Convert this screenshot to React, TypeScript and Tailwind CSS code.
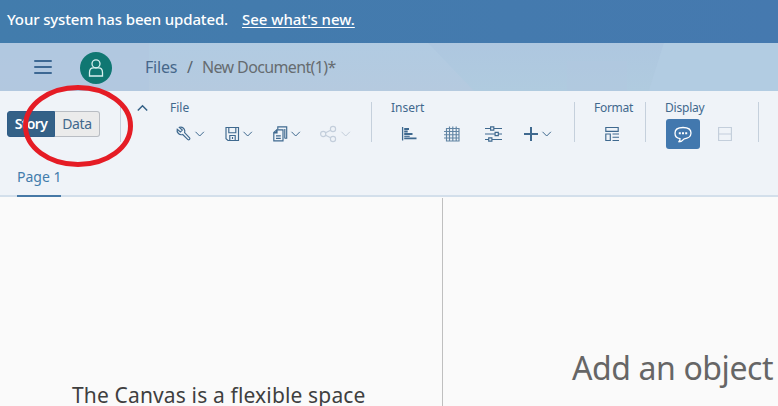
import type { ReactNode } from "react";

function Icon({ w, children, faded = false }: { w: string; children: ReactNode; faded?: boolean }) {
  return (
    <span className={`flex h-[16px] shrink-0 ${w} ${faded ? "text-[#c3cedb]" : "text-[#3f698f]"}`}>
      <svg className="size-full overflow-visible" fill="none" stroke="currentColor" strokeWidth="1.15">
        {children}
      </svg>
    </span>
  );
}

function Chevron({ faded = false }: { faded?: boolean }) {
  return (
    <Icon w="w-[9px]" faded={faded}>
      <path d="M.5 5.800 4.700 10 8.900 5.800" strokeWidth="1" />
    </Icon>
  );
}

function Divider() {
  return <div className="mt-[11px] h-[40px] w-px shrink-0 bg-[#c5d0dc]" />;
}

function Group({ label, tracking, className, children }: { label: string; tracking: string; className: string; children: ReactNode }) {
  return (
    <section className={`shrink-0 pt-[8px] ${className}`}>
      <h2 className={`h-[18px] text-[12px] leading-[18px] whitespace-nowrap text-[#41688d] ${tracking}`}>{label}</h2>
      <div className="flex h-[34px] items-center">{children}</div>
    </section>
  );
}

export default function App() {
  return (
    <div className="relative flex h-[406px] w-[778px] flex-col overflow-hidden bg-[#fafafa] font-['Noto_Sans',sans-serif] text-[#346187]">
      <div className="flex h-[43px] shrink-0 items-center bg-[#427cac] bg-linear-to-r from-[#427cac] to-[#4579af] pb-[4px] pl-[7px] text-[15px] font-medium whitespace-nowrap text-white">
        <span className="w-[235px] tracking-[-0.14px]">Your system has been updated.</span>
        <a className="tracking-[-0.02px] underline underline-offset-2">See what's new.</a>
      </div>

      <header className="relative flex h-[48px] shrink-0 items-center bg-[#b3cae0] pl-[34px]">
        <svg className="absolute inset-0 size-full" preserveAspectRatio="none" viewBox="0 0 778 48">
          <defs>
            <linearGradient id="sky" x1="0" y1="0" x2="0" y2="1">
              <stop offset="0" stopColor="#b1cbe2" />
              <stop offset="1" stopColor="#b5cadf" />
            </linearGradient>
            <linearGradient id="glow" x1="0" y1="0" x2="0" y2="1">
              <stop offset="0" stopColor="#aec7e0" />
              <stop offset="1" stopColor="#b0cbdf" />
            </linearGradient>
          </defs>
          <path fill="url(#sky)" d="M0 0h778v48H0z" />
          <path fill="#b0c7df" d="M0 0h149v48H0z" opacity=".6" />
          <path fill="url(#glow)" d="M428 0h236l-15 48H474z" />
          <path fill="#b2c8df" d="M567 18h60v30h-60z" opacity=".5" />
          <path fill="#b2cce2" d="M664 0h114v48H649z" />
        </svg>
        <svg className="relative size-[18px]" fill="none" stroke="#3d6893" strokeWidth="2" strokeLinecap="round">
          <path d="M1 3h16M1 9h16M1 15h16" />
        </svg>
        <div className="relative ml-[28px] mt-[2px] flex size-[32px] items-center justify-center rounded-full bg-[#107772]">
          <svg className="size-[20px]" fill="none" stroke="#d8f0ef" strokeWidth="1.3">
            <circle cx="10" cy="5.800" r="4" />
            <path d="M3.500 18v-3.600c0-3 1.800-4.600 4-4.600h5c2.200 0 4 1.600 4 4.600V18Z" />
          </svg>
        </div>
        <nav className="relative ml-[33px] flex items-center text-[16px] whitespace-nowrap text-[#46678a]">
          <span className="w-[42px] tracking-[-0.2px]">Files</span>
          <span className="w-[15px] text-[#59636b]">/</span>
          <span className="tracking-[-0.63px] text-[#666c70]">New Document(1)*</span>
        </nav>
      </header>

      <div className="h-[106px] shrink-0 border-b-2 border-[#d3dfeb] bg-[#eff3f8]">
        <div className="flex h-[70px]">
          <div className="mt-[20px] ml-[7px] flex h-[26px] w-[93px] shrink-0 text-[14px] leading-[24px]">
            <button className="w-[48px] rounded-l-[3px] border border-[#2f5c87] bg-[#346187] font-semibold tracking-[-0.7px] text-white">Story</button>
            <button className="w-[45px] rounded-r-[3px] border border-l-0 border-[#b9bdc3] bg-[#ebebeb] tracking-[-0.4px] text-[#41688d]">Data</button>
          </div>
          <div className="w-[20px] shrink-0" />
          <Divider />
          <svg className="mt-[13px] ml-[16px] h-[8px] w-[11px] shrink-0" fill="none" stroke="#346187" strokeWidth="1.500">
            <path d="M.8 6.500 5.500 1.800 10.200 6.500" />
          </svg>

          <Group label="File" tracking="tracking-normal" className="ml-[22px] w-[201px]">
            <div className="ml-[6px] flex w-[48px] gap-[4px]">
              <Icon w="w-[15px]">
                <path d="M1.200 3.200 4.400 5.900 6.300 4.100 3.400 1.400C5 .8 7.100 1.400 8.200 3.100c.8 1.200.8 2.400.4 3.600l5 5.100c.9 1-.6 2.700-1.700 1.800L6.700 8.500C3.500 9.600.3 6.600 1.200 3.200Z" />
              </Icon>
              <Chevron />
            </div>
            <div className="flex w-[48px] gap-[4px] pl-px">
              <Icon w="w-[14px]">
                <path d="M1 1.500h12.500v13H3L1 12.700ZM3.800 1.500v5.200h7V1.500M4.800 14.500v-5h5.400v5M7.500 11v2" />
              </Icon>
              <Chevron />
            </div>
            <div className="flex w-[48px] gap-[3px] pl-px">
              <Icon w="w-[15px]">
                <path d="M3.800 3.800H10v11H.8V6.500Z" />
                <path d="M.8 6.700h3V3.800" strokeWidth="1.600" />
                <path d="M3 9.800h4.800M3 12.300h4.800M4.800 3.600V.8h8.900v11.400H12M11.800 3v9.500" />
              </Icon>
              <Chevron />
            </div>
            <div className="flex gap-[4px]">
              <Icon w="w-[17px]" faded>
                <circle cx="3.200" cy="8" r="2.600" />
                <circle cx="13" cy="3" r="2.600" />
                <circle cx="13" cy="13" r="2.600" />
                <path d="m5.600 6.800 5-2.600M5.600 9.200l5 2.600" />
              </Icon>
              <Chevron faded />
            </div>
          </Group>
          <Divider />

          <Group label="Insert" tracking="tracking-normal" className="ml-[19px] w-[183px]">
            <div className="ml-[11px] w-[42px]">
              <Icon w="w-[15px]">
                <path d="M.6 1v13.500" strokeWidth="1.300" />
                <path d="M2.200 3h4.800M2.200 5.500h3.500M2.200 8h8.300M2.200 12.300h12.300" strokeWidth="1.800" />
                <path d="M2.200 10.300h5.500" />
              </Icon>
            </div>
            <div className="w-[41px]">
              <Icon w="w-[15px]">
                <path d="M2.500 2.500h12.500v12.500H2.500ZM5.500.5v14.500M8.800.5v14.500M12.200.5v14.500M0 5.500h15M0 8.700h15M0 12h15" opacity=".8" />
              </Icon>
            </div>
            <div className="w-[40px]">
              <Icon w="w-[17px]">
                <path d="M0 2.500h5.500M9 2.500h8M0 8h10M13.500 8H17M0 13.500h3.500M7 13.500h10M5.600.9h3.200v3.200H5.600ZM10.100 6.400h3.200v3.200h-3.200ZM3.700 11.900h3.200v3.200H3.700Z" />
              </Icon>
            </div>
            <div className="-ml-px flex gap-[4px]">
              <Icon w="w-[14px]">
                <path d="M7 1v14M0 8h14" strokeWidth="2" />
              </Icon>
              <Chevron />
            </div>
          </Group>
          <Divider />

          <Group label="Format" tracking="tracking-[-0.3px]" className="ml-[19px] w-[51px]">
            <div className="ml-[11px]">
              <Icon w="w-[14px]">
                <path d="M.8 1.500h12.400v3.800H.8ZM.8 8h4.500v6.500H.8ZM7.500 8H14M7.500 11.200H14M7.500 14.500H14" />
              </Icon>
            </div>
          </Group>
          <Divider />

          <Group label="Display" tracking="tracking-[-0.2px]" className="ml-[19px] w-[93px]">
            <button className="ml-px flex h-[30px] w-[34px] items-center justify-center rounded-[3px] bg-[#4278ae]">
              <svg className="h-[17px] w-[18px]" fill="none" stroke="#fff" strokeWidth="1.300">
                <path d="M4.500 15.800c1.200-.8 1.700-1.900 1.500-3.200C3.200 12.200 1 10 1 7.200 1 3.800 4 1.500 9 1.500s8 2.300 8 5.600-2.900 5.500-6.800 5.700c-1.300 1.700-3.400 2.800-5.700 3Z" />
                <path d="M4.800 7.200h2M8 7.200h2M11.200 7.200h2" strokeWidth="2" />
              </svg>
            </button>
            <div className="ml-[18px]">
              <Icon w="w-[14px]" faded>
                <path d="M.6 1.500h12.800v13H.6ZM.6 8h12.800" />
              </Icon>
            </div>
          </Group>
          <Divider />
        </div>
        <div className="ml-[17px] h-[36px] w-[44px] border-b-2 border-[#4678a6] pt-[4px] text-[14px] leading-[24px] whitespace-nowrap text-[#427cac]">Page 1</div>
      </div>

      <main className="flex min-h-0 flex-1 whitespace-nowrap">
        <div className="mt-px w-[443px] shrink-0 border-r border-[#bfbfbf] pt-[182px] pl-[72px] text-[21px] leading-[30px] tracking-[0.15px] text-[#3f3f3f]">The Canvas is a flexible space</div>
        <div className="pt-[147px] pl-[129px] text-[32px] leading-[48px] tracking-[-0.4px] text-[#666]">Add an object</div>
      </main>

      <svg className="pointer-events-none absolute top-[83px] left-[21px] h-[86px] w-[114px]" fill="none">
        <ellipse cx="57" cy="43" rx="52.500" ry="38.500" stroke="#e51c25" strokeWidth="5" />
      </svg>
    </div>
  );
}
